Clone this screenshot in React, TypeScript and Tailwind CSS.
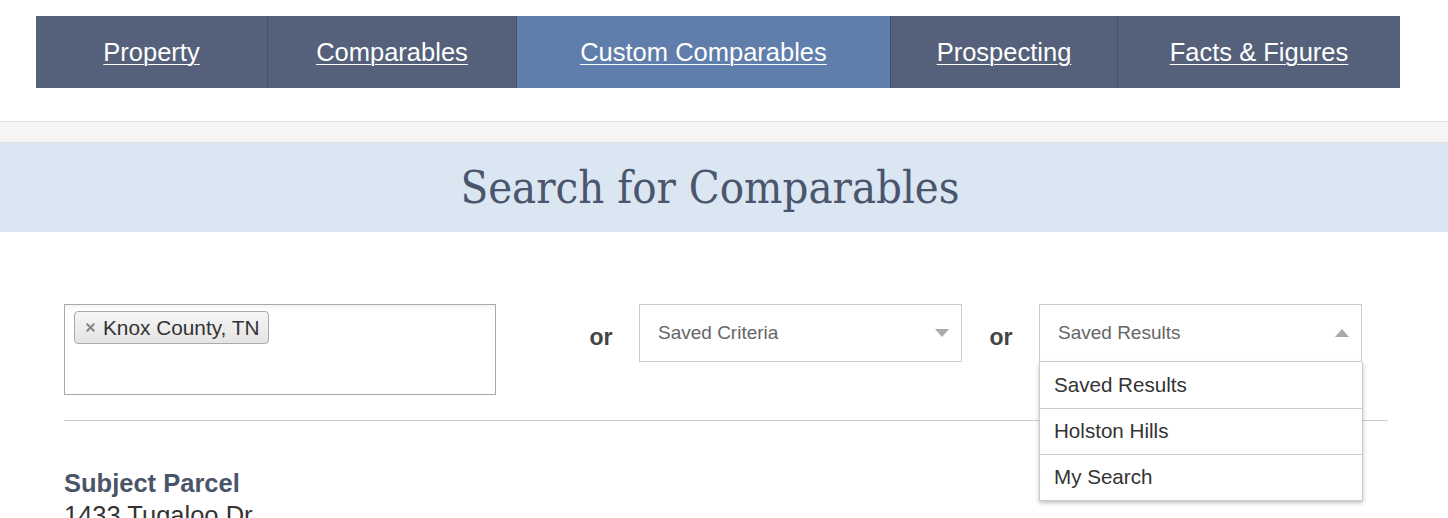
import { X } from 'lucide-react'

const TABS = [
  { label: 'Property', width: 'w-[231px]' },
  { label: 'Comparables', width: 'w-[249px]' },
  { label: 'Custom Comparables', width: 'w-[374px]', active: true },
  { label: 'Prospecting', width: 'w-[227px]' },
  { label: 'Facts & Figures', width: 'w-[283px]' },
]

const SAVED = ['Saved Results', 'Holston Hills', 'My Search']

function Caret({ up }: { up?: boolean }) {
  return (
    <svg width="14" height="8" viewBox="0 0 14 8" className="text-[#aaaaaa]">
      {up ? <path d="M0 8 L7 0 L14 8 Z" fill="currentColor" /> : <path d="M0 0 L14 0 L7 8 Z" fill="currentColor" />}
    </svg>
  )
}

function SelectBox({ label, open, children }: { label: string; open?: boolean; children?: React.ReactNode }) {
  return (
    <div className="relative w-[323px]">
      <div className="flex h-[58px] items-center justify-between border border-[#cccccc] bg-white pl-[18px] pr-[12px] text-[19px] text-[#666666]">
        <span>{label}</span>
        <Caret up={open} />
      </div>
      {children}
    </div>
  )
}

function Or() {
  return <span className="block mt-[18px] w-[26px] text-center text-[23px] leading-[30px] font-bold text-[#444444]">or</span>
}

export default function App() {
  return (
    <div className="min-h-screen bg-white font-[family-name:Liberation_Sans,Arial,sans-serif]">
      {/* Top nav */}
      <div className="pl-[36px] pt-[16px]">
        <nav className="flex h-[72px] w-[1364px] bg-[#55617a]">
          {TABS.map((t, i) => (
            <a
              key={t.label}
              href="#"
              className={`flex ${t.width} items-center justify-center text-[25.5px] text-white underline underline-offset-[3px] decoration-1 ${
                t.active ? 'bg-[#5f7eab]' : ''
              } ${i > 0 ? 'border-l border-[#45526a]' : ''}`}
            >
              {t.label}
            </a>
          ))}
        </nav>
      </div>

      {/* Gray strip */}
      <div className="mt-[33px] h-[22px] border-y border-[#e2e2e2] bg-[#f5f5f5]" />

      {/* Title band */}
      <div className="flex h-[89px] items-center justify-center bg-[#dae6f1] pr-[28px]">
        <h1 className="font-[family-name:DejaVu_Serif_Condensed,DejaVu_Serif,serif] text-[45px] text-[#4a566d]">
          Search for Comparables
        </h1>
      </div>

      {/* Search row */}
      <div className="pl-[64px] pr-[60px] pt-[72px]">
        <div className="flex items-start">
          <div className="h-[91px] w-[432px] border border-[#a9a9a9] bg-white pl-[9px] pt-[6px] shadow-[inset_0_6px_6px_-4px_rgba(0,0,0,0.06)]">
            <span className="inline-flex h-[33px] items-center gap-[6px] rounded-[4px] border border-[#aaaaaa] bg-gradient-to-b from-[#f6f6f6] to-[#e4e4e4] pl-[9px] pr-[9px] text-[20.8px] text-[#333333]">
              <X size={13} strokeWidth={4} className="text-[#888888]" />
              Knox County, TN
            </span>
          </div>
          <div className="ml-[92px]">
            <Or />
          </div>
          <div className="ml-[25px]">
            <SelectBox label="Saved Criteria" />
          </div>
          <div className="ml-[26px]">
            <Or />
          </div>
          <div className="ml-[25px]">
            <SelectBox label="Saved Results" open>
              <ul className="absolute left-0 top-[58px] z-10 w-[324px] border border-t-0 border-[#cccccc] bg-white shadow-[0_2px_4px_rgba(0,0,0,0.25)]">
                {SAVED.map((s, i) => (
                  <li
                    key={s}
                    className={`flex h-[46px] items-center pl-[14px] text-[20.6px] text-[#333333] ${i > 0 ? 'border-t border-[#cccccc]' : ''}`}
                  >
                    {s}
                  </li>
                ))}
              </ul>
            </SelectBox>
          </div>
        </div>

        <hr className="mt-[25px] border-[#cccccc]" />

        <div className="pt-[46px] text-[25.5px] leading-[32px] text-[#4a5568]">
          <div className="font-bold">Subject Parcel</div>
          <div className="text-[#333333]">1433 Tugaloo Dr</div>
        </div>
      </div>
    </div>
  )
}
